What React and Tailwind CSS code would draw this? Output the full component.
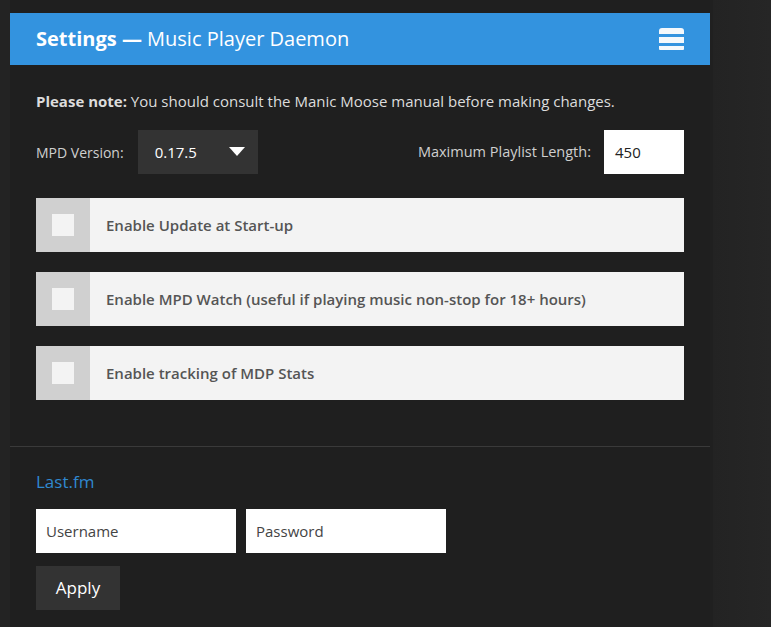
export default function App() {
  const rows = [
    "Enable Update at Start-up",
    "Enable MPD Watch (useful if playing music non-stop for 18+ hours)",
    "Enable tracking of MDP Stats",
  ];
  return (
    <div
      className="w-[771px] h-[627px] overflow-hidden bg-[#232323] flex"
      style={{ fontFamily: '"Open Sans", "Noto Sans", sans-serif' }}
    >
      <div className="w-[10px] shrink-0 bg-[#232323]" />
      <div className="w-[700px] shrink-0 bg-[#1f1f1f] pt-[13px] flex flex-col">
        <div className="h-[52px] bg-[#3393df] flex items-center justify-between pl-[26px] pr-[26px]">
          <div className="text-[20px] text-white leading-none">
            <span className="font-bold">Settings —</span> Music Player Daemon
          </div>
          <svg width="25" height="24" viewBox="0 0 25 24">
            <path d="M0 4 Q0 1 3 1 H22 Q25 1 25 4 V7 H0 Z" fill="#f4f8fc" />
            <rect x="0" y="10" width="25" height="6" fill="#f4f8fc" />
            <path d="M0 19 H25 V22 Q25 23 24 23 H1 Q0 23 0 22 Z" fill="#f4f8fc" />
          </svg>
        </div>
        <div className="px-[26px]">
          <p className="mt-[26px] text-[15px] text-[#dcdcdc] leading-[20px]">
            <span className="font-bold">Please note:</span> You should consult the Manic Moose manual before making changes.
          </p>
          <div className="mt-[19px] flex items-center justify-between h-[44px]">
            <div className="flex items-center">
              <span className="text-[14px] text-[#cfcfcf] mr-[14px]">MPD Version:</span>
              <div className="w-[120px] h-[44px] bg-[#333333] flex items-center justify-between pl-[17px] pr-[13px]">
                <span className="text-[15px] text-white font-medium">0.17.5</span>
                <svg width="16" height="10" viewBox="0 0 16 10">
                  <path d="M0 0 H16 L8 9 Z" fill="#ffffff" />
                </svg>
              </div>
            </div>
            <div className="flex items-center">
              <span className="text-[14.5px] text-[#cfcfcf] mr-[13px]">Maximum Playlist Length:</span>
              <div className="w-[80px] h-[44px] bg-white flex items-center pl-[11px] text-[15px] text-[#222]">450</div>
            </div>
          </div>
          <div className="mt-[24px] flex flex-col gap-[20px]">
            {rows.map((r) => (
              <div key={r} className="h-[54px] flex bg-[#f3f3f3]">
                <div className="w-[54px] h-full bg-[#d0d0d0] flex items-center justify-center">
                  <div className="w-[22px] h-[22px] bg-[#f3f3f3]" />
                </div>
                <div className="flex items-center pl-[16px] text-[15px] font-semibold text-[#555555]">{r}</div>
              </div>
            ))}
          </div>
        </div>
        <div className="mt-[46px] h-px bg-[#3a3a3a]" />
        <div className="px-[26px]">
          <div className="mt-[23px] text-[17px] text-[#3088cf] leading-[24px]">Last.fm</div>
          <div className="mt-[15px] flex gap-[10px]">
            <div className="w-[200px] h-[44px] bg-white flex items-center pl-[10px] text-[15px] text-[#444]">Username</div>
            <div className="w-[200px] h-[44px] bg-white flex items-center pl-[10px] text-[15px] text-[#444]">Password</div>
          </div>
          <div className="mt-[13px] w-[84px] h-[44px] bg-[#333333] flex items-center justify-center text-[17px] text-white">Apply</div>
        </div>
      </div>
      <div className="w-[3px] shrink-0 bg-[#202020]" />
      <div className="flex-1 bg-gradient-to-r from-[#232323] to-[#262626]" />
    </div>
  );
}
